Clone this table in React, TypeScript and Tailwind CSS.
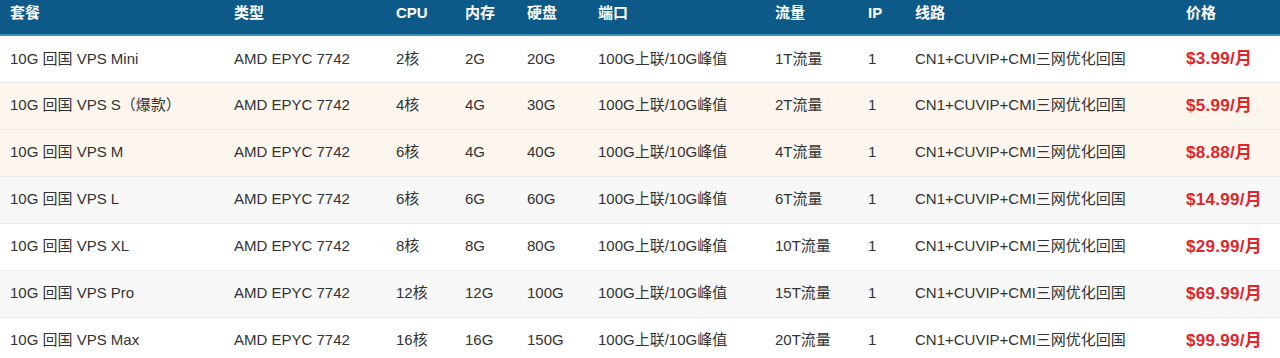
import React from 'react';

const plans = [
  { name: '10G 回国 VPS Mini', cpu: '2核', ram: '2G', disk: '20G', traffic: '1T流量', price: '$3.99/月', bg: 'bg-white' },
  { name: '10G 回国 VPS S（爆款）', cpu: '4核', ram: '4G', disk: '30G', traffic: '2T流量', price: '$5.99/月', bg: 'bg-[#fdf6ee]' },
  { name: '10G 回国 VPS M', cpu: '6核', ram: '4G', disk: '40G', traffic: '4T流量', price: '$8.88/月', bg: 'bg-[#fdf6ee]' },
  { name: '10G 回国 VPS L', cpu: '6核', ram: '6G', disk: '60G', traffic: '6T流量', price: '$14.99/月', bg: 'bg-[#f8f8f8]' },
  { name: '10G 回国 VPS XL', cpu: '8核', ram: '8G', disk: '80G', traffic: '10T流量', price: '$29.99/月', bg: 'bg-white' },
  { name: '10G 回国 VPS Pro', cpu: '12核', ram: '12G', disk: '100G', traffic: '15T流量', price: '$69.99/月', bg: 'bg-[#f8f8f8]' },
  { name: '10G 回国 VPS Max', cpu: '16核', ram: '16G', disk: '150G', traffic: '20T流量', price: '$99.99/月', bg: 'bg-white' },
];

const headers = ['套餐', '类型', 'CPU', '内存', '硬盘', '端口', '流量', 'IP', '线路', '价格'];
const widths = ['w-[224px]', 'w-[162px]', 'w-[69px]', 'w-[62px]', 'w-[71px]', 'w-[177px]', 'w-[93px]', 'w-[47px]', 'w-[271px]', 'w-[104px]'];

export default function App() {
  return (
    <div className="w-[1280px] h-[358px] overflow-hidden bg-white font-['Liberation_Sans','Noto_Sans_CJK_SC',sans-serif] text-[15px] text-[#333]">
      <table className="w-[1280px] table-fixed border-collapse">
        <colgroup>
          {widths.map((w, i) => (
            <col key={i} className={w} />
          ))}
        </colgroup>
        <thead>
          <tr className="bg-[#0d5a89] border-b-2 border-[#3f8db8]">
            {headers.map((h) => (
              <th key={h} className="h-[35px] pl-[10px] pb-[8px] text-left align-middle font-bold text-white">
                {h}
              </th>
            ))}
          </tr>
        </thead>
        <tbody>
          {plans.map((p) => (
            <tr key={p.name} className={`${p.bg} border-b border-[#ececec]`}>
              <td className="h-[47px] pl-[10px] whitespace-nowrap">{p.name}</td>
              <td className="pl-[10px]">AMD EPYC 7742</td>
              <td className="pl-[10px]">{p.cpu}</td>
              <td className="pl-[10px]">{p.ram}</td>
              <td className="pl-[10px]">{p.disk}</td>
              <td className="pl-[10px]">100G上联/10G峰值</td>
              <td className="pl-[10px]">{p.traffic}</td>
              <td className="pl-[10px]">1</td>
              <td className="pl-[10px] whitespace-nowrap">CN1+CUVIP+CMI三网优化回国</td>
              <td className="pl-[10px] font-bold text-[17px] tracking-[0.3px] text-[#e0262b] whitespace-nowrap">{p.price}</td>
            </tr>
          ))}
        </tbody>
      </table>
    </div>
  );
}
